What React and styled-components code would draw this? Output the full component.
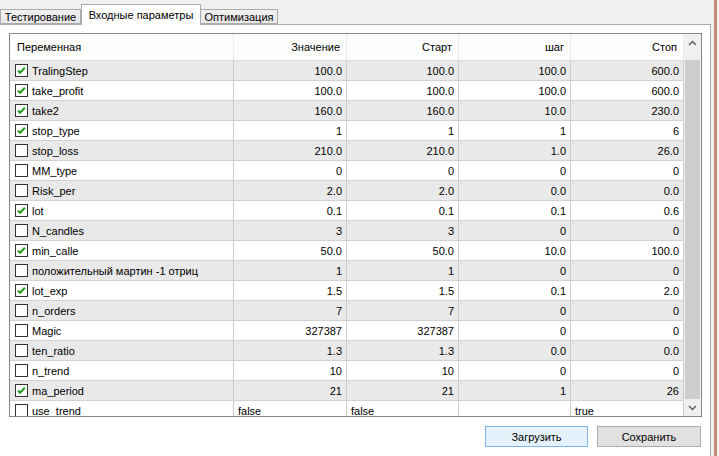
import React from "react";
import styled, { createGlobalStyle } from "styled-components";

const Global = createGlobalStyle`
  html, body { margin: 0; padding: 0; background: #f0f0f0; }
  body { font-family: "Liberation Sans", Arial, sans-serif; font-size: 11px; color: #000; }
  * { box-sizing: border-box; }
`;

const Root = styled.div`
  width: 719px;
  height: 456px;
  overflow: hidden;
  display: flex;
  background: #f0f0f0;
`;

const Main = styled.div`
  width: 711px;
  display: flex;
  flex-direction: column;
`;

const Edge = styled.div`
  width: 3px;
  margin-left: 3px;
  background: #c48c73;
`;

const TabStrip = styled.div`
  height: 24px;
  display: flex;
  align-items: flex-end;
`;

const Tab = styled.div`
  width: ${(p) => p.$w}px;
  height: ${(p) => (p.$active ? 21 : 15)}px;
  display: flex;
  align-items: center;
  justify-content: center;
  white-space: nowrap;
  border: 1px solid #acacac;
  border-left: ${(p) => (p.$noLeft ? "none" : "1px solid #acacac")};
  border-bottom: ${(p) => (p.$active ? "none" : "1px solid #acacac")};
  background: ${(p) => (p.$active ? "#ffffff" : "linear-gradient(#f0f0f0, #e6e6e6)")};
  margin-bottom: ${(p) => (p.$active ? "-1px" : "0")};
  position: relative;
  z-index: ${(p) => (p.$active ? 2 : 1)};
  padding-bottom: ${(p) => (p.$active ? "1px" : "0")};
`;

const Page = styled.div`
  flex: 1;
  background: #ffffff;
  border-top: 1px solid #acacac;
  border-right: 1px solid #acacac;
  padding: 8px 8px 0 9px;
  display: flex;
  flex-direction: column;
`;

const Grid = styled.div`
  height: 384px;
  border: 1px solid #828790;
  display: flex;
  background: #ffffff;
`;

const TableArea = styled.div`
  width: 674px;
  overflow: hidden;
  display: flex;
  flex-direction: column;
`;

const COLS = [224, 113, 112, 112, 113];

const HeaderRow = styled.div`
  height: 27px;
  flex: none;
  display: flex;
  background: #fdfdfd;
  border-bottom: 1px solid #d5dfea;
`;

const HeaderCell = styled.div`
  width: ${(p) => p.$w}px;
  flex: none;
  display: flex;
  align-items: center;
  justify-content: ${(p) => (p.$left ? "flex-start" : "flex-end")};
  padding: ${(p) => (p.$left ? "0 0 1px 7px" : "0 6px 1px 0")};
  border-right: 1px solid #e3ebf5;
  white-space: nowrap;
`;

const Row = styled.div`
  height: 20px;
  flex: none;
  display: flex;
  background: ${(p) => (p.$alt ? "#e9e9e9" : "#ffffff")};
  border-bottom: 1px solid #d2d2d2;
`;

const Cell = styled.div`
  width: ${(p) => p.$w}px;
  flex: none;
  display: flex;
  align-items: center;
  justify-content: ${(p) => (p.$left ? "flex-start" : "flex-end")};
  padding: ${(p) => (p.$left ? "0 0 0 4px" : "0 4px 0 0")};
  border-right: 1px solid #cbcbcb;
  white-space: nowrap;
  overflow: hidden;
`;

const NameCell = styled(Cell)`
  padding: 0 0 0 5px;
  gap: 4px;
`;

const Box = styled.svg`
  flex: none;
  width: 13px;
  height: 13px;
  display: block;
`;

const ScrollBar = styled.div`
  width: 17px;
  flex: none;
  background: #f0f0f0;
  display: flex;
  flex-direction: column;
`;

const Arrow = styled.div`
  height: 17px;
  flex: none;
  display: flex;
  align-items: center;
  justify-content: center;
`;

const Track = styled.div`
  flex: 1;
  display: flex;
  flex-direction: column;
  padding: 9px 1px 0 1px;
`;

const Thumb = styled.div`
  flex: 1;
  background: #cdcdcd;
`;

const ButtonRow = styled.div`
  display: flex;
  justify-content: flex-end;
  gap: 9px;
  margin-top: 9px;
  padding-right: 1px;
`;

const Button = styled.div`
  width: ${(p) => p.$w}px;
  height: 21px;
  display: flex;
  align-items: center;
  justify-content: center;
  border: 1px solid ${(p) => (p.$primary ? "#7eb4ea" : "#adadad")};
  background: ${(p) => (p.$primary ? "#e5f1fb" : "#e1e1e1")};
`;

const Check = ({ on }) => (
  <Box viewBox="0 0 13 13">
    <rect x="0.5" y="0.5" width="12" height="12" fill="#fff" stroke="#333" />
    {on && (
      <polyline
        points="3,6.5 5.2,8.8 9.8,3.8"
        fill="none"
        stroke="#1f9a1f"
        strokeWidth="2"
      />
    )}
  </Box>
);

const rows = [
  ["TralingStep", true, "100.0", "100.0", "100.0", "600.0"],
  ["take_profit", true, "100.0", "100.0", "100.0", "600.0"],
  ["take2", true, "160.0", "160.0", "10.0", "230.0"],
  ["stop_type", true, "1", "1", "1", "6"],
  ["stop_loss", false, "210.0", "210.0", "1.0", "26.0"],
  ["MM_type", false, "0", "0", "0", "0"],
  ["Risk_per", false, "2.0", "2.0", "0.0", "0.0"],
  ["lot", true, "0.1", "0.1", "0.1", "0.6"],
  ["N_candles", false, "3", "3", "0", "0"],
  ["min_calle", true, "50.0", "50.0", "10.0", "100.0"],
  ["положительный мартин -1 отриц", false, "1", "1", "0", "0"],
  ["lot_exp", true, "1.5", "1.5", "0.1", "2.0"],
  ["n_orders", false, "7", "7", "0", "0"],
  ["Magic", false, "327387", "327387", "0", "0"],
  ["ten_ratio", false, "1.3", "1.3", "0.0", "0.0"],
  ["n_trend", false, "10", "10", "0", "0"],
  ["ma_period", true, "21", "21", "1", "26"],
  ["use_trend", false, "false", "false", "", "true", true],
];

const headers = ["Переменная", "Значение", "Старт", "шаг", "Стоп"];

export default function App() {
  return (
    <>
      <Global />
      <Root>
        <Main>
          <TabStrip>
            <Tab $w={81}>Тестирование</Tab>
            <Tab $w={120} $active>Входные параметры</Tab>
            <Tab $w={77} $noLeft>Оптимизация</Tab>
          </TabStrip>
          <Page>
            <Grid>
              <TableArea>
                <HeaderRow>
                  {headers.map((h, i) => (
                    <HeaderCell key={h} $w={COLS[i]} $left={i === 0}>
                      {h}
                    </HeaderCell>
                  ))}
                </HeaderRow>
                {rows.map((r, idx) => (
                  <Row key={r[0]} $alt={idx % 2 === 0}>
                    <NameCell $w={COLS[0]} $left>
                      <Check on={r[1]} />
                      <span>{r[0]}</span>
                    </NameCell>
                    {r.slice(2, 6).map((v, j) => (
                      <Cell key={j} $w={COLS[j + 1]} $left={!!r[6]}>
                        {v}
                      </Cell>
                    ))}
                  </Row>
                ))}
              </TableArea>
              <ScrollBar>
                <Arrow>
                  <svg width="9" height="6" viewBox="0 0 9 6">
                    <polyline points="1,5 4.5,1.5 8,5" fill="none" stroke="#606060" strokeWidth="1.5" />
                  </svg>
                </Arrow>
                <Track>
                  <Thumb />
                </Track>
                <Arrow>
                  <svg width="9" height="6" viewBox="0 0 9 6">
                    <polyline points="1,1 4.5,4.5 8,1" fill="none" stroke="#606060" strokeWidth="1.5" />
                  </svg>
                </Arrow>
              </ScrollBar>
            </Grid>
            <ButtonRow>
              <Button $w={103} $primary>Загрузить</Button>
              <Button $w={104}>Сохранить</Button>
            </ButtonRow>
          </Page>
        </Main>
        <Edge />
      </Root>
    </>
  );
}
